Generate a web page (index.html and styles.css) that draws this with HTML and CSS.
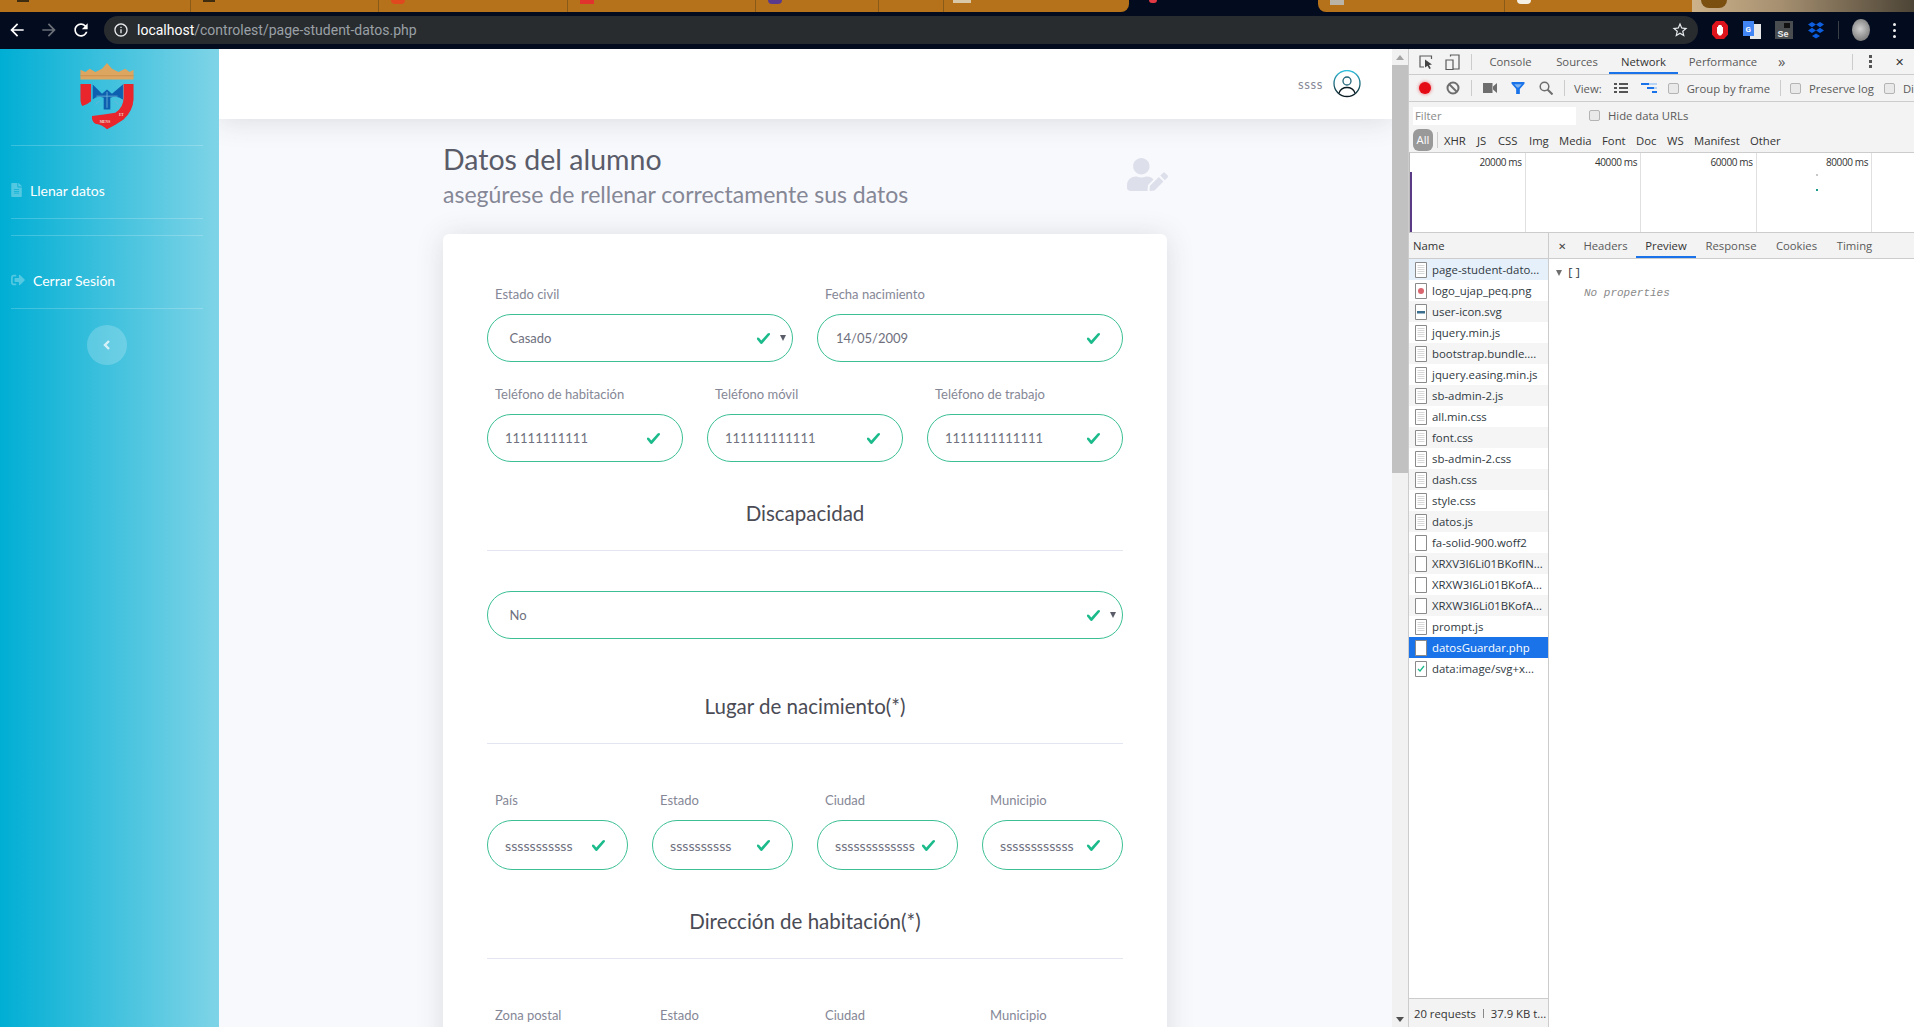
FILE: index.html
```html
<!DOCTYPE html>
<html lang="en">
<head>
  <meta charset="UTF-8">
  <title>localhost/controlest/page-student-datos.php</title>
  <link rel="stylesheet" href="styles.css">
</head>
<body>
  <svg class="defs" width="0" height="0">
    <symbol id="doc" viewBox="0 0 12 16">
      <path d="M.5.5h11v15H.5z" fill="#fff" stroke="#8a8a8a"/>
      <path d="M2.500 3.500h7M2.500 5.500h7M2.500 7.500h7M2.500 9.500h7M2.500 11.500h7" stroke="#d8d8d8"/>
    </symbol>
    <symbol id="blank" viewBox="0 0 12 16">
      <path d="M.5.5h11v15H.5z" fill="#fff" stroke="#8a8a8a"/>
    </symbol>
    <symbol id="tick" viewBox="0 0 8 8">
      <path fill="#1cbb8c" d="M2.300 6.730L.6 4.530c-.4-1.040.46-1.400 1.100-.8l1.100 1.400 3.400-3.800c.6-.63 1.600-.27 1.200.7l-4 4.600c-.43.5-.8.4-1.100.1z"/>
    </symbol>
  </svg>

  <div class="tabstrip">
    <div class="tab tab-first"><i class="fav fav-code"></i></div>
    <div class="tab tab-w"><i class="fav fav-code"></i></div>
    <div class="tab tab-w"><i class="fav fav-red"></i></div>
    <div class="tab tab-w"><i class="fav fav-square"></i></div>
    <div class="tab tab-s"><i class="fav fav-purple"></i></div>
    <div class="tab tab-m"></div>
    <div class="tab tab-l"><i class="fav fav-pale"></i></div>
    <div class="tab-active"><i class="fav fav-pin"></i></div>
    <div class="tab tab-r1"><i class="fav fav-gray"></i></div>
    <div class="tab tab-r2"><i class="fav fav-white"></i></div>
    <div class="wallpaper"><i class="fav fav-dark"></i></div>
  </div>

  <div class="toolbar">
    <svg class="nav-icon back" viewBox="0 0 24 24"><path fill="#fff" d="M20 11H7.830l5.590-5.590L12 4l-8 8 8 8 1.410-1.410L7.830 13H20v-2z"/></svg>
    <svg class="nav-icon fwd" viewBox="0 0 24 24"><path fill="#6b7078" d="M4 11h12.170l-5.590-5.590L12 4l8 8-8 8-1.410-1.410L16.170 13H4v-2z"/></svg>
    <svg class="nav-icon reload" viewBox="0 0 24 24"><path fill="#fff" d="M17.650 6.350C16.200 4.900 14.210 4 12 4c-4.420 0-7.990 3.580-7.990 8s3.570 8 7.990 8c3.730 0 6.840-2.550 7.730-6h-2.080c-.82 2.330-3.040 4-5.650 4-3.310 0-6-2.690-6-6s2.690-6 6-6c1.660 0 3.140.69 4.220 1.780L13 11h7V4l-2.350 2.350z"/></svg>
    <div class="omnibox">
      <svg class="info" viewBox="0 0 24 24"><path fill="#e8eaed" d="M11 7h2v2h-2zm0 4h2v6h-2zm1-9C6.480 2 2 6.480 2 12s4.480 10 10 10 10-4.480 10-10S17.520 2 12 2zm0 18c-4.410 0-8-3.590-8-8s3.590-8 8-8 8 3.590 8 8-3.590 8-8 8z"/></svg>
      <span class="url"><b>localhost</b>/controlest/page-student-datos.php</span>
      <svg class="star" viewBox="0 0 24 24"><path fill="#e8eaed" d="M22 9.240l-7.190-.62L12 2 9.190 8.630 2 9.240l5.460 4.730L5.820 21 12 17.270 18.180 21l-1.630-7.030L22 9.240zM12 15.400l-3.760 2.270 1-4.280-3.320-2.880 4.380-.38L12 6.100l1.710 4.040 4.380.38-3.320 2.880 1 4.280L12 15.400z"/></svg>
    </div>
    <div class="extensions">
      <svg class="ext stop" viewBox="0 0 18 18"><path fill="#e0141c" d="M5 0h8l4 4.500v9L13 18H5l-4-4.500v-9z"/><path fill="#fff" d="M6 6h1V4.500h1V4h2v.5h1V6h1v6l-2 2.500H8L6 12z"/></svg>
      <svg class="ext gt" viewBox="0 0 18 18"><path fill="#e8e8e8" d="M7 3h11v15H7z"/><path fill="#4285f4" d="M0 0h11v15H0z"/><text x="2.500" y="10.500" class="ext-g">G</text></svg>
      <svg class="ext se" viewBox="0 0 18 18"><path fill="#4a4d50" d="M0 0h18v18H0z"/><path fill="#111" d="M9 2h6v5H9z"/><text x="2.500" y="16" class="ext-se">Se</text></svg>
      <svg class="ext db" viewBox="0 0 18 18"><path fill="#0d5fe0" d="M5 1l4 2.600L5 6.200 1 3.600zM13 1l4 2.600-4 2.600-4-2.600zM5 6.800l4 2.600-4 2.600-4-2.600zM13 6.800l4 2.600-4 2.600-4-2.600zM9 12.400l4 2.600-4 2.600L5 15z"/></svg>
      <i class="ext-sep"></i>
      <div class="avatar"></div>
      <div class="kebab"><i></i><i></i><i></i></div>
    </div>
  </div>

  <div class="window">
    <aside class="sidebar">
      <svg class="logo" viewBox="60 25 160 205">
        <path fill="#dca560" d="M60 75V45l15 7 13-10 17 10 20-10 15-17 15 17 20 10 20-10 13 10 12-7v30z"/>
        <path fill="#c9924f" d="M60 62h160v3H60z"/>
        <path fill="#e8262c" d="M60 88h32v52q-12 10-26 15-6-7-6-25z"/>
        <path fill="#e8262c" d="M190 88h30v47q-2 35-30 60-25 17-50 30-12-13-35-17-13-8-10-23 35-5 70-10 25-15 25-45z"/>
        <path fill="#0d5fb0" d="M97 90l28 28 15-13 15 13 33-28v45q-18-13-38-5v35h-20v-35q-20-8-33 5z"/>
        <path fill="none" stroke="#6fb4d8" stroke-width="2.500" d="M140 112v48M108 125h64M118 140q-8 2-12 10M162 140q8 2 12 10"/>
        <text x="118" y="207" class="logo-text">MENS</text>
        <text x="176" y="186" class="logo-text">ET</text>
      </svg>
      <hr class="side-rule">
      <a class="side-link">
        <svg class="side-icon file" viewBox="0 0 384 512"><path d="M224 136V0H24C10.700 0 0 10.700 0 24v464c0 13.300 10.700 24 24 24h336c13.300 0 24-10.700 24-24V160H248c-13.200 0-24-10.800-24-24zm64 236c0 6.600-5.400 12-12 12H108c-6.600 0-12-5.400-12-12v-8c0-6.600 5.400-12 12-12h168c6.600 0 12 5.400 12 12v8zm0-64c0 6.600-5.400 12-12 12H108c-6.600 0-12-5.400-12-12v-8c0-6.600 5.400-12 12-12h168c6.600 0 12 5.400 12 12v8zm0-72v8c0 6.600-5.400 12-12 12H108c-6.600 0-12-5.400-12-12v-8c0-6.600 5.400-12 12-12h168c6.600 0 12 5.400 12 12zm96-114.100v6.100H256V0h6.100c6.400 0 12.500 2.500 17 7l97.900 98c4.500 4.500 7 10.600 7 16.900z"/></svg>
        <span>Llenar datos</span>
      </a>
      <hr class="side-rule">
      <hr class="side-rule spaced">
      <a class="side-link">
        <svg class="side-icon exit" viewBox="0 0 512 512"><path d="M497 273L329 441c-15 15-41 4.500-41-17v-96H152c-13.300 0-24-10.700-24-24v-96c0-13.300 10.700-24 24-24h136V88c0-21.400 25.900-32 41-17l168 168c9.300 9.400 9.300 24.600 0 34zM192 436v-40c0-6.600-5.400-12-12-12H96c-17.700 0-32-14.300-32-32V160c0-17.700 14.300-32 32-32h84c6.600 0 12-5.400 12-12V76c0-6.600-5.400-12-12-12H96c-53 0-96 43-96 96v192c0 53 43 96 96 96h84c6.600 0 12-5.400 12-12z"/></svg>
        <span>Cerrar Sesión</span>
      </a>
      <hr class="side-rule">
      <button class="side-toggle">
        <svg viewBox="0 0 10 12"><path d="M7 2L3 6l4 4" fill="none" stroke="#d6f1f7" stroke-width="2.400"/></svg>
      </button>
    </aside>

    <main class="main">
      <header class="topbar">
        <span class="user-name">ssss</span>
        <svg class="user-icon" viewBox="0 0 28 28">
          <defs>
            <linearGradient id="ug" x1="0" y1="0" x2="0" y2="1">
              <stop offset="0" stop-color="#2fc0de"/>
              <stop offset="1" stop-color="#0b1a20"/>
            </linearGradient>
          </defs>
          <circle cx="14" cy="13.500" r="13" fill="none" stroke="url(#ug)" stroke-width="1.300"/>
          <circle cx="14" cy="11" r="4" fill="none" stroke="#23657a" stroke-width="1.300"/>
          <path d="M6 23c1.500-4 4.500-5.500 8-5.500s6.500 1.500 8 5.500" fill="none" stroke="#0b1a20" stroke-width="1.300"/>
        </svg>
      </header>

      <section class="content">
        <div class="page-head">
          <div>
            <h1 class="page-title">Datos del alumno</h1>
            <p class="page-sub">asegúrese de rellenar correctamente sus datos</p>
          </div>
          <svg class="head-icon" viewBox="0 0 640 512"><path d="M224 256c70.700 0 128-57.300 128-128S294.700 0 224 0 96 57.300 96 128s57.300 128 128 128zm89.600 32h-16.700c-22.200 10.200-46.900 16-72.900 16s-50.600-5.800-72.900-16h-16.700C60.200 288 0 348.200 0 422.400V464c0 26.500 21.500 48 48 48h274.900c-2.400-6.800-3.400-14-2.600-21.300l6.800-60.900 1.200-11.100 7.900-7.900 77.300-77.300c-24.500-27.700-60-45.500-99.900-45.500zm45.300 145.300l-6.800 61c-1.100 10.200 7.500 18.800 17.600 17.600l60.900-6.800 137.900-137.900-71.700-71.700-138 137.800zM633 268.900L595.100 231c-9.300-9.300-24.500-9.300-33.800 0l-37.800 37.800-4.100 4.100 71.800 71.700 41.800-41.800c9.300-9.400 9.300-24.500 0-33.900z"/></svg>
        </div>

        <form class="card">
          <div class="form-row cols-2">
            <div class="field-wrap">
              <label>Estado civil</label>
              <div class="field select"><span>Casado</span><svg class="check"><use href="#tick"/></svg><i class="caret"></i></div>
            </div>
            <div class="field-wrap">
              <label>Fecha nacimiento</label>
              <div class="field"><span>14/05/2009</span><svg class="check"><use href="#tick"/></svg></div>
            </div>
          </div>
          <div class="form-row cols-3">
            <div class="field-wrap">
              <label>Teléfono de habitación</label>
              <div class="field num"><span>11111111111</span><svg class="check"><use href="#tick"/></svg></div>
            </div>
            <div class="field-wrap">
              <label>Teléfono móvil</label>
              <div class="field num"><span>111111111111</span><svg class="check"><use href="#tick"/></svg></div>
            </div>
            <div class="field-wrap">
              <label>Teléfono de trabajo</label>
              <div class="field num"><span>1111111111111</span><svg class="check"><use href="#tick"/></svg></div>
            </div>
          </div>

          <h3 class="section-title">Discapacidad</h3>
          <hr class="rule">
          <div class="field select no-label"><span>No</span><svg class="check"><use href="#tick"/></svg><i class="caret"></i></div>

          <h3 class="section-title after-select">Lugar de nacimiento(*)</h3>
          <hr class="rule">
          <div class="form-row cols-4 after-rule">
            <div class="field-wrap">
              <label>País</label>
              <div class="field tall"><span>sssssssssss</span><svg class="check"><use href="#tick"/></svg></div>
            </div>
            <div class="field-wrap">
              <label>Estado</label>
              <div class="field tall"><span>ssssssssss</span><svg class="check"><use href="#tick"/></svg></div>
            </div>
            <div class="field-wrap">
              <label>Ciudad</label>
              <div class="field tall"><span>sssssssssssss</span><svg class="check"><use href="#tick"/></svg></div>
            </div>
            <div class="field-wrap">
              <label>Municipio</label>
              <div class="field tall"><span>ssssssssssss</span><svg class="check"><use href="#tick"/></svg></div>
            </div>
          </div>

          <h3 class="section-title">Dirección de habitación(*)</h3>
          <hr class="rule">
          <div class="form-row cols-4 after-rule">
            <div class="field-wrap"><label>Zona postal</label><div class="field tall"></div></div>
            <div class="field-wrap"><label>Estado</label><div class="field tall"></div></div>
            <div class="field-wrap"><label>Ciudad</label><div class="field tall"></div></div>
            <div class="field-wrap"><label>Municipio</label><div class="field tall"></div></div>
          </div>
        </form>
      </section>
    </main>

    <div class="scrollbar">
      <span class="arrow up"></span>
      <div class="thumb"></div>
      <span class="arrow down"></span>
    </div>

    <div class="devtools">
      <div class="dt-row dt-tabs">
        <svg class="dt-icon inspect" viewBox="0 0 14 14"><path d="M12.500 4V1H1v11h4" fill="none" stroke="#5a5a5a" stroke-width="1.200"/><path d="M6 4.500l7 5-3 .6 1.800 3.200-1.500.7-1.800-3.300L6 12.500z" fill="#444"/></svg>
        <svg class="dt-icon device" viewBox="0 0 15 16"><path d="M5.500 2.500V1h8.500v14H8" fill="none" stroke="#5a5a5a" stroke-width="1.200"/><path d="M1 6h7v9.500H1z" fill="none" stroke="#5a5a5a" stroke-width="1.200"/></svg>
        <i class="dt-sep sep-a"></i>
        <span class="dt-tab t-console">Console</span>
        <span class="dt-tab t-sources">Sources</span>
        <span class="dt-tab t-network active">Network</span>
        <span class="dt-tab t-perf">Performance</span>
        <span class="dt-more">»</span>
        <i class="dt-sep sep-b"></i>
        <span class="dt-dots"><i></i><i></i><i></i></span>
        <span class="dt-close">✕</span>
      </div>

      <div class="dt-row dt-controls">
        <i class="record"></i>
        <svg class="dt-icon block" viewBox="0 0 14 14"><circle cx="7" cy="7" r="5.500" fill="none" stroke="#6e6e6e" stroke-width="2"/><path d="M3 3l8 8" stroke="#6e6e6e" stroke-width="2"/></svg>
        <i class="dt-sep sep-c"></i>
        <svg class="dt-icon cam" viewBox="0 0 14 10"><path fill="#6e6e6e" d="M0 0h9.500v10H0zM10 3.500L14 0v10l-4-3.500z"/></svg>
        <svg class="dt-icon funnel" viewBox="0 0 14 13"><path fill="#1a73e8" d="M0 0h14v2L9 7.500V13H5V7.500L0 2z"/><path fill="#7fb4f0" d="M3 2.500h8L8 6H6z"/></svg>
        <svg class="dt-icon mag" viewBox="0 0 14 14"><circle cx="5.500" cy="5.500" r="4.300" fill="none" stroke="#6e6e6e" stroke-width="1.500"/><path d="M8.500 8.500l5 5" stroke="#6e6e6e" stroke-width="2"/></svg>
        <i class="dt-sep sep-d"></i>
        <span class="dt-text view-label">View:</span>
        <svg class="dt-icon list" viewBox="0 0 14 10"><path fill="#555" d="M0 0h3v2H0zM5 0h9v2H5zM0 4h3v2H0zM5 4h9v2H5zM0 8h3v2H0zM5 8h9v2H5z"/></svg>
        <svg class="dt-icon fall" viewBox="0 0 17 10"><path fill="#1a73e8" d="M0 0h8v2H0zM6 4h7v2H6zM11 8h5v2h-5z"/><path fill="#b6d3f5" d="M8 0h8v2H8zM13 4h3v2h-3z"/></svg>
        <label class="dt-check c-group"><i class="box"></i>Group by frame</label>
        <i class="dt-sep sep-e"></i>
        <label class="dt-check c-preserve"><i class="box"></i>Preserve log</label>
        <label class="dt-check c-disable"><i class="box"></i>Di</label>
      </div>

      <div class="dt-filter">
        <input class="filter-input" placeholder="Filter">
        <label class="dt-check c-hide"><i class="box"></i>Hide data URLs</label>
      </div>

      <div class="dt-types">
        <span class="pill">All</span>
        <i class="dt-sep sep-g"></i>
        <span class="type ty-xhr">XHR</span>
        <span class="type ty-js">JS</span>
        <span class="type ty-css">CSS</span>
        <span class="type ty-img">Img</span>
        <span class="type ty-media">Media</span>
        <span class="type ty-font">Font</span>
        <span class="type ty-doc">Doc</span>
        <span class="type ty-ws">WS</span>
        <span class="type ty-man">Manifest</span>
        <span class="type ty-other">Other</span>
      </div>

      <div class="overview">
        <div class="ov-col"><span>20000 ms</span><i class="purple"></i></div>
        <div class="ov-col"><span>40000 ms</span></div>
        <div class="ov-col"><span>60000 ms</span></div>
        <div class="ov-col"><span>80000 ms</span><i class="mark-a"></i><i class="mark-b"></i></div>
        <div class="ov-col last"></div>
      </div>

      <div class="dt-split">
        <div class="name-col">
          <div class="name-head">Name</div>
          <ul class="req-list">
            <li class="first"><svg class="file-ic"><use href="#doc"/></svg>page-student-dato...</li>
            <li><svg class="file-ic" viewBox="0 0 12 16"><use href="#blank"/><circle cx="6" cy="8" r="3" fill="#d9666e"/></svg>logo_ujap_peq.png</li>
            <li><svg class="file-ic" viewBox="0 0 12 16"><use href="#blank"/><path d="M2 7h8v2.500H2z" fill="#3c6f8f"/></svg>user-icon.svg</li>
            <li><svg class="file-ic"><use href="#doc"/></svg>jquery.min.js</li>
            <li><svg class="file-ic"><use href="#doc"/></svg>bootstrap.bundle....</li>
            <li><svg class="file-ic"><use href="#doc"/></svg>jquery.easing.min.js</li>
            <li><svg class="file-ic"><use href="#doc"/></svg>sb-admin-2.js</li>
            <li><svg class="file-ic"><use href="#doc"/></svg>all.min.css</li>
            <li><svg class="file-ic"><use href="#doc"/></svg>font.css</li>
            <li><svg class="file-ic"><use href="#doc"/></svg>sb-admin-2.css</li>
            <li><svg class="file-ic"><use href="#doc"/></svg>dash.css</li>
            <li><svg class="file-ic"><use href="#doc"/></svg>style.css</li>
            <li><svg class="file-ic"><use href="#doc"/></svg>datos.js</li>
            <li><svg class="file-ic"><use href="#blank"/></svg>fa-solid-900.woff2</li>
            <li><svg class="file-ic"><use href="#blank"/></svg>XRXV3I6Li01BKofIN...</li>
            <li><svg class="file-ic"><use href="#blank"/></svg>XRXW3I6Li01BKofA...</li>
            <li><svg class="file-ic"><use href="#blank"/></svg>XRXW3I6Li01BKofA...</li>
            <li><svg class="file-ic"><use href="#doc"/></svg>prompt.js</li>
            <li class="selected"><svg class="file-ic"><use href="#blank"/></svg>datosGuardar.php</li>
            <li><svg class="file-ic" viewBox="0 0 12 16"><use href="#blank"/><path d="M3 8l2 2 4-5" fill="none" stroke="#1cbb8c" stroke-width="1.300"/></svg>data:image/svg+x...</li>
          </ul>
          <div class="status">20 requests<i></i>37.9 KB t...</div>
        </div>
        <div class="preview-col">
          <div class="preview-tabs">
            <span class="pv-x">✕</span>
            <span class="pv-tab pv-headers">Headers</span>
            <span class="pv-tab pv-preview active">Preview</span>
            <span class="pv-tab pv-response">Response</span>
            <span class="pv-tab pv-cookies">Cookies</span>
            <span class="pv-tab pv-timing">Timing</span>
          </div>
          <div class="json-line"><i class="tri"></i>[]</div>
          <div class="json-empty">No properties</div>
        </div>
      </div>
    </div>
  </div>
</body>
</html>
```

FILE: styles.css
```css
* {
  box-sizing: border-box;
}

body {
  margin: 0;
  height: 100vh;
  display: flex;
  flex-direction: column;
  overflow: hidden;
  font-family: 'Lato', sans-serif;
  background: #030b1e;
}

.defs {
  position: absolute;
}

/* browser chrome */
.tabstrip {
  height: 12px;
  display: flex;
  flex: none;
  overflow: hidden;
}

.tab {
  background: #b5721a;
  border-right: 1px solid #8a5a18;
  padding-left: 12px;
}

.tab-first { width: 191px; padding-left: 17px; }
.tab-w { width: 188.300px; }
.tab-s { width: 123px; }
.tab-m { width: 65px; }
.tab-l { width: 185px; padding-left: 9px; border-radius: 0 0 8px 0; border-right: none; }
.tab-active { width: 189px; padding-left: 20px; }
.tab-r1 { width: 187px; border-radius: 0 0 0 8px; padding-left: 12px; }
.tab-r2 { width: 187px; border-right: none; padding-left: 12px; }

.wallpaper {
  flex: 1;
  padding-left: 9px;
  background: linear-gradient(90deg, #cdb28a, #a58f70 40%, #4c4436);
}

.fav {
  display: block;
  width: 14px;
  height: 4px;
}

.fav-code { background: #3d2c10; width: 12px; height: 2px; }
.fav-red { background: #e0481f; border-radius: 0 0 8px 8px; }
.fav-square { background: #e2322d; }
.fav-purple { background: #5a3a8c; border-radius: 0 0 8px 8px; }
.fav-pale { background: #d9c9a8; width: 18px; height: 3px; }
.fav-pin { background: #e23a45; width: 8px; height: 3px; border-radius: 0 0 4px 4px; }
.fav-gray { background: #b9b3a8; height: 5px; }
.fav-white { background: #f4f0e6; height: 4px; border-radius: 0 0 6px 6px; }
.fav-dark { background: #7a4f10; width: 26px; height: 8px; border-radius: 0 0 13px 13px; }

.toolbar {
  height: 37px;
  flex: none;
  display: flex;
  align-items: flex-start;
  padding-top: 4px;
}

.nav-icon {
  width: 20px;
  height: 20px;
  margin-top: 4px;
  flex: none;
}

.back { margin-left: 7px; }
.fwd { margin-left: 12px; }
.reload { margin-left: 12px; }

.omnibox {
  margin-left: 13px;
  width: 1594px;
  height: 28px;
  border-radius: 14px;
  background: #292c2f;
  display: flex;
  align-items: center;
  padding-left: 9px;
}

.info {
  width: 16px;
  height: 16px;
}

.url {
  margin-left: 8px;
  font: 14px/1 'Roboto', sans-serif;
  color: #9aa0a6;
  flex: 1;
}

.url b {
  font-weight: 400;
  color: #fff;
}

.star {
  width: 18px;
  height: 18px;
  margin-right: 9px;
}

.extensions {
  display: flex;
  align-items: center;
  height: 28px;
  padding-left: 13px;
}

.ext {
  width: 18px;
  height: 18px;
  flex: none;
  margin-right: 14px;
}

.ext-g { font: 700 8px 'Roboto', sans-serif; fill: #fff; }
.ext-se { font: 700 9px 'Liberation Sans', sans-serif; fill: #eee; }

.ext-sep {
  width: 1px;
  height: 18px;
  background: #3a3f45;
  margin-left: -1px;
  margin-right: 13px;
}

.avatar {
  width: 18px;
  height: 22px;
  border-radius: 50%;
  background: radial-gradient(circle at 45% 45%, #cfcfcf, #777 80%);
}

.kebab {
  margin-left: 23px;
  display: flex;
  flex-direction: column;
  gap: 3px;
}

.kebab i {
  display: block;
  width: 3px;
  height: 3px;
  background: #f0f0f0;
  border-radius: 50%;
}

.window {
  flex: 1;
  display: flex;
  min-height: 0;
}

/* sidebar */
.sidebar {
  width: 219px;
  flex: none;
  padding: 14px 16px 0 11px;
  background: linear-gradient(90deg, #00aed4, #7fd4e7);
}

.logo {
  display: block;
  width: 54px;
  height: 68px;
  margin: 0 0 14px 69px;
}

.logo-text {
  font: 700 11px 'Liberation Serif', serif;
  fill: #f4d9d0;
}

.side-rule {
  margin: 0;
  border: none;
  border-top: 1px solid rgba(255, 255, 255, 0.2);
}

.side-rule.spaced {
  margin-top: 16px;
}

.side-link {
  height: 72px;
  padding-top: 16px;
  display: flex;
  align-items: center;
  color: #fff;
  font-size: 14px;
}

.side-icon {
  fill: rgba(255, 255, 255, 0.3);
  flex: none;
}

.side-icon.file {
  width: 11px;
  height: 14px;
  margin-right: 8px;
}

.side-icon.exit {
  width: 14px;
  height: 14px;
  margin-right: 8px;
}

.side-toggle {
  display: flex;
  align-items: center;
  justify-content: center;
  width: 40px;
  height: 40px;
  margin: 16px 0 0 76px;
  padding: 0;
  border: none;
  border-radius: 50%;
  background: rgba(255, 255, 255, 0.2);
}

.side-toggle svg {
  width: 10px;
  height: 12px;
}

/* main page */
.main {
  flex: 1;
  min-width: 0;
  overflow: hidden;
  background: #f8f9fc;
}

.topbar {
  height: 70px;
  display: flex;
  align-items: center;
  justify-content: flex-end;
  padding: 0 31px 0 0;
  background: #fff;
  box-shadow: 0 .15rem 1.75rem 0 rgba(58, 59, 69, .15);
  position: relative;
}

.user-name {
  font-size: 13px;
  letter-spacing: .6px;
  color: #858796;
  margin-right: 10px;
}

.user-icon {
  width: 28px;
  height: 28px;
}

.content {
  width: 724px;
  margin-left: 224px;
}

.page-head {
  display: flex;
  justify-content: space-between;
  height: 115px;
  padding-top: 23px;
}

.page-title {
  margin: 0;
  font-size: 28.500px;
  line-height: 34px;
  font-weight: 400;
  color: #5a5c69;
}

.page-sub {
  margin: 3px 0 0;
  font-size: 23px;
  line-height: 30px;
  color: #858796;
}

.head-icon {
  width: 41px;
  height: 33px;
  margin: 16px -1px 0 0;
  fill: #dddfeb;
}

.card {
  background: #fff;
  border-radius: 6px;
  padding: 50px 44px 0;
  height: 900px;
  box-shadow: 0 .15rem 1.75rem 0 rgba(58, 59, 69, .15);
}

.form-row {
  display: grid;
  gap: 24px;
}

.form-row + .form-row {
  margin-top: 22px;
}

.cols-2 { grid-template-columns: repeat(2, 1fr); }
.cols-3 { grid-template-columns: repeat(3, 1fr); }
.cols-4 { grid-template-columns: repeat(4, 1fr); }

.after-rule {
  margin-top: 46px;
}

.field-wrap label {
  display: block;
  height: 20px;
  margin: 0 0 10px 8px;
  font-size: 13px;
  line-height: 20px;
  color: #858796;
}

.field {
  height: 48px;
  display: flex;
  align-items: center;
  padding: 0 21px 0 18px;
  border: 1px solid #3dbf96;
  border-radius: 24px;
  font-size: 13px;
  color: #6e707e;
}

.field.num {
  padding-left: 17px;
}

.field.tall {
  height: 50px;
  padding-left: 17px;
  border-radius: 25px;
  font-size: 14.200px;
}

.field.select {
  padding: 0 6px 0 21.500px;
}

.field span {
  flex: 1;
  white-space: nowrap;
}

.check {
  width: 15px;
  height: 15px;
  flex: none;
}

.caret {
  width: 0;
  height: 0;
  margin-left: 9px;
  border-left: 3.500px solid transparent;
  border-right: 3.500px solid transparent;
  border-top: 6px solid #5a5c69;
}

.section-title {
  margin: 37px 0 23px;
  font-size: 20.500px;
  line-height: 28px;
  font-weight: 400;
  text-align: center;
  color: #4a4b55;
}

.section-title.after-select {
  margin-top: 53px;
}

.rule {
  margin: 0;
  border: none;
  border-top: 1px solid #e3e6f0;
}

.no-label {
  margin-top: 40px;
}

/* page scrollbar */
.scrollbar {
  width: 16px;
  flex: none;
  background: #f1f1f1;
  display: flex;
  flex-direction: column;
  align-items: center;
}

.thumb {
  width: 100%;
  height: 408px;
  background: #c1c1c1;
}

.arrow {
  width: 0;
  height: 0;
  border-left: 4px solid transparent;
  border-right: 4px solid transparent;
}

.arrow.up {
  margin: 6px 0 5px;
  border-bottom: 5px solid #a3a3a3;
}

.arrow.down {
  margin-top: auto;
  margin-bottom: 5px;
  border-top: 5px solid #505050;
}

/* devtools */
.devtools {
  width: 506px;
  flex: none;
  display: flex;
  flex-direction: column;
  background: #f3f3f3;
  border-left: 1px solid #ccc;
  font-family: 'Open Sans', sans-serif;
  font-size: 11.300px;
  color: #5a5a5a;
  overflow: hidden;
}

.dt-row {
  display: flex;
  align-items: center;
  flex: none;
  white-space: nowrap;
  border-bottom: 1px solid #ccc;
}

.dt-tabs { height: 26px; }
.dt-controls { height: 27px; }

.dt-icon { flex: none; }
.dt-sep {
  width: 1px;
  height: 16px;
  background: #ccc;
  flex: none;
}

.inspect { width: 14px; height: 14px; margin-left: 10px; }
.device { width: 15px; height: 16px; margin-left: 12px; }
.sep-a { margin-left: 11px; }

.dt-tab {
  height: 100%;
  display: flex;
  align-items: center;
  justify-content: center;
  flex: none;
  color: #5a5a5a;
}

.t-console { width: 69px; margin-left: 4px; }
.t-sources { width: 64px; }
.t-network { width: 69px; color: #333; }
.t-perf { width: 90px; }

.dt-tab.active {
  border-bottom: 2px solid #1a73e8;
  padding-top: 2px;
}

.dt-more { margin-left: 10px; font-size: 15px; line-height: 1; }
.sep-b { margin-left: 67px; }

.dt-dots {
  margin-left: 16px;
  display: flex;
  flex-direction: column;
  gap: 2px;
}

.dt-dots i {
  display: block;
  width: 3px;
  height: 3px;
  background: #555;
}

.dt-close {
  margin-left: 23px;
  font-size: 11px;
  color: #333;
}

.record {
  width: 12px;
  height: 12px;
  margin-left: 10px;
  border-radius: 50%;
  background: #e50b15;
  box-shadow: 0 0 3px 1px rgba(229, 11, 21, .35);
  flex: none;
}

.block { width: 14px; height: 14px; margin-left: 15px; }
.sep-c { margin-left: 11px; }
.cam { width: 14px; height: 10px; margin-left: 11px; }
.funnel { width: 14px; height: 12px; margin-left: 14px; }
.mag { width: 14px; height: 14px; margin-left: 14px; }
.sep-d { margin-left: 11px; }
.view-label { margin-left: 9px; }
.list { width: 14px; height: 10px; margin-left: 12px; }
.fall { width: 17px; height: 10px; margin-left: 13px; }

.dt-check {
  display: flex;
  align-items: center;
  flex: none;
  color: #5a5a5a;
}

.box {
  width: 11px;
  height: 11px;
  margin-right: 8px;
  border: 1px solid #b4b4b4;
  border-radius: 2px;
  background: #e9e9e9;
  flex: none;
}

.c-group { margin-left: 10px; }
.sep-e { margin-left: 10px; }
.c-preserve { margin-left: 9px; }
.c-disable { margin-left: 10px; }

.dt-filter {
  height: 26px;
  flex: none;
  display: flex;
  align-items: center;
  padding: 1px 0 0 4px;
}

.filter-input {
  width: 163px;
  height: 18px;
  padding: 0 2px;
  border: none;
  background: #fff;
  font: 11.300px 'Open Sans', sans-serif;
}

.filter-input::placeholder {
  color: #8a8a8a;
}

.c-hide { margin-left: 13px; }

.dt-types {
  height: 24px;
  flex: none;
  display: flex;
  align-items: center;
  padding-left: 4px;
}

.pill {
  width: 20px;
  height: 22px;
  line-height: 22px;
  border-radius: 6px;
  text-align: center;
  background: #999;
  color: #fff;
  flex: none;
}

.sep-g { margin-left: 4px; }
.type { flex: none; color: #333; }
.ty-xhr { width: 33px; margin-left: 6px; }
.ty-js { width: 21px; }
.ty-css { width: 31px; }
.ty-img { width: 30px; }
.ty-media { width: 43px; }
.ty-font { width: 34px; }
.ty-doc { width: 31px; }
.ty-ws { width: 27px; }
.ty-man { width: 56px; }

.overview {
  height: 81px;
  flex: none;
  display: flex;
  background: #fff;
  border-top: 1px solid #ccc;
  border-bottom: 1px solid #ccc;
  border-left: 1px solid #bbb;
}

.ov-col {
  position: relative;
  width: 115.500px;
  border-right: 1px solid #e0e0e0;
  text-align: right;
  padding: 2px 3px 0 0;
  font-size: 10px;
  letter-spacing: -.4px;
  color: #333;
}

.ov-col.last {
  flex: 1;
  border-right: none;
}

.ov-col .purple {
  position: absolute;
  left: 0;
  top: 19px;
  bottom: 0;
  width: 2px;
  background: #5b3a86;
}

.mark-a, .mark-b {
  position: absolute;
  left: 59px;
  width: 2px;
}

.mark-a { top: 21px; height: 2px; background: #c8c8c8; }
.mark-b { top: 36px; height: 2px; background: #1a9a8a; }

.dt-split {
  flex: 1;
  display: flex;
  min-height: 0;
  background: #fff;
}

.name-col {
  width: 140px;
  flex: none;
  display: flex;
  flex-direction: column;
  border-right: 1px solid #ccc;
}

.name-head {
  height: 26px;
  flex: none;
  line-height: 25px;
  padding-left: 4px;
  background: #f3f3f3;
  border-bottom: 1px solid #ccc;
  color: #333;
}

.req-list {
  flex: 1;
  margin: 0;
  padding: 0;
  list-style: none;
}

.req-list li {
  height: 21px;
  display: flex;
  align-items: center;
  padding-left: 6px;
  font-size: 11.400px;
  color: #303942;
  white-space: nowrap;
  overflow: hidden;
}

.req-list li:nth-child(odd) { background: #f5f5f5; }
.req-list li.first { background: #e6f0fb; }
.req-list li.selected { background: #1a73e8; color: #fff; }

.file-ic {
  width: 12px;
  height: 16px;
  margin-right: 5px;
  flex: none;
}

.status {
  height: 29px;
  flex: none;
  display: flex;
  align-items: center;
  padding-left: 5px;
  background: #f3f3f3;
  border-top: 1px solid #ccc;
  white-space: nowrap;
  overflow: hidden;
  color: #333;
}

.status i {
  width: 1px;
  height: 9px;
  margin: 0 7px;
  background: #888;
  flex: none;
}

.preview-col {
  flex: 1;
  min-width: 0;
}

.preview-tabs {
  height: 26px;
  display: flex;
  align-items: center;
  background: #f3f3f3;
  border-bottom: 1px solid #ccc;
  white-space: nowrap;
}

.pv-x {
  width: 26px;
  text-align: center;
  font-size: 10px;
  color: #444;
}

.pv-tab {
  height: 100%;
  display: flex;
  align-items: center;
  justify-content: center;
  flex: none;
}

.pv-headers { width: 61px; }
.pv-preview { width: 60px; }
.pv-response { width: 70px; }
.pv-cookies { width: 61px; }
.pv-timing { width: 55px; }

.pv-tab.active {
  border-bottom: 2px solid #1a73e8;
  padding-top: 2px;
  color: #333;
}

.json-line {
  display: flex;
  align-items: center;
  height: 20px;
  margin-top: 4px;
  padding-left: 7px;
  font: 11px 'Liberation Mono', monospace;
  letter-spacing: 1px;
  color: #303942;
}

.tri {
  width: 0;
  height: 0;
  margin-right: 5px;
  border-left: 3.500px solid transparent;
  border-right: 3.500px solid transparent;
  border-top: 6px solid #6e6e6e;
}

.json-empty {
  padding-left: 35px;
  font: italic 11px/20px 'Liberation Mono', monospace;
  color: #8a8a8a;
}
```
